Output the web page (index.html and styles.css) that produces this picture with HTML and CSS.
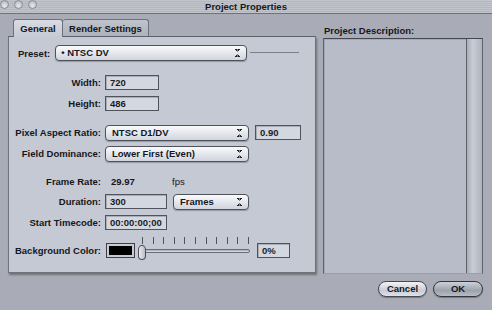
FILE: index.html
```html
<html>

<head>
	<title>Project Properties</title>
	<link rel="stylesheet" href="styles.css">
</head>

<body>
	<div class="titlebar">
		<div class="lights"><span></span><span></span><span></span></div>
		<div class="title">Project Properties</div>
	</div>

	<div class="content">
		<div class="left">
			<div class="tabs">
				<div class="tab active">General</div>
				<div class="tab">Render Settings</div>
			</div>
			<div class="panel">
				<div class="row preset-row">
					<span class="plabel">Preset:</span>
					<div class="popup preset">• NTSC DV<i class="arrows"></i></div>
					<div class="rule"></div>
				</div>

				<div class="row r-width">
					<span class="label">Width:</span>
					<div class="field w-small">720</div>
				</div>
				<div class="row r-gap6">
					<span class="label">Height:</span>
					<div class="field w-small">486</div>
				</div>

				<div class="row r-gap14">
					<span class="label">Pixel Aspect Ratio:</span>
					<div class="popup wide">NTSC D1/DV<i class="arrows"></i></div>
					<div class="field w-ratio">0.90</div>
				</div>
				<div class="row r-gap6">
					<span class="label">Field Dominance:</span>
					<div class="popup wide">Lower First (Even)<i class="arrows"></i></div>
				</div>

				<div class="row r-rate">
					<span class="label">Frame Rate:</span>
					<span class="value">29.97</span>
					<span class="unit">fps</span>
				</div>
				<div class="row r-gap5">
					<span class="label">Duration:</span>
					<div class="field w-mid">300</div>
					<div class="popup frames">Frames<i class="arrows"></i></div>
				</div>
				<div class="row r-gap6">
					<span class="label">Start Timecode:</span>
					<div class="field w-mid">00:00:00;00</div>
				</div>

				<div class="row r-bg">
					<span class="label">Background Color:</span>
					<div class="swatch"></div>
					<div class="slider">
						<div class="ticks">
							<i></i><i></i><i></i><i></i><i></i><i></i><i></i><i></i><i></i><i></i><i></i>
						</div>
						<div class="track"></div>
						<div class="thumb"></div>
					</div>
					<div class="field w-pct">0%</div>
				</div>
			</div>
		</div>

		<div class="right">
			<div class="desc-label">Project Description:</div>
			<div class="desc">
				<div class="scroll"></div>
			</div>
		</div>
	</div>

	<div class="buttons">
		<div class="btn">Cancel</div>
		<div class="btn default">OK</div>
	</div>
</body>

</html>
```

FILE: styles.css
```css
* {
	box-sizing: border-box;
}

body {
	margin: 0;
	width: 492px;
	height: 310px;
	overflow: hidden;
	background: #a9acb6;
	font-family: "Liberation Sans", Arial, sans-serif;
	font-size: 9.5px;
	font-weight: bold;
	color: #15171c;
}

/* title bar */
.titlebar {
	height: 14px;
	display: flex;
	align-items: center;
	position: relative;
	background: repeating-linear-gradient(#c2c4cb 0, #c2c4cb 1px, #b4b7bf 1px, #b4b7bf 2px);
	border-bottom: 1px solid #6e7179;
}

.lights {
	display: flex;
	gap: 5px;
	margin-top: -4px;
}

.lights span {
	width: 9px;
	height: 9px;
	border-radius: 50%;
	border: 1px solid #8a8d95;
	background: radial-gradient(circle at 50% 70%, #e8e9ee, #aeb1b9);
}

.title {
	position: absolute;
	left: 0;
	right: 0;
	top: 0;
	text-align: center;
	line-height: 13px;
}

.content {
	display: flex;
	margin-top: 5px;
}

/* left tab area */
.left {
	margin-left: 8px;
	width: 308px;
}

.tabs {
	display: flex;
	margin-left: 5px;
	height: 17px;
}

.tab {
	height: 17px;
	line-height: 17px;
	text-align: center;
	white-space: nowrap;
	border: 1px solid #6d7079;
	border-bottom: none;
	border-radius: 3px 3px 0 0;
	background: linear-gradient(#bfc3cc, #aeb2bc);
}

.tab.active {
	width: 50px;
	height: 18px;
	margin-bottom: -1px;
	position: relative;
	z-index: 1;
	background: linear-gradient(#d8dbe2, #c6cad4);
}

.tab:not(.active) {
	width: 86px;
	border-left: none;
}

.panel {
	height: 237px;
	background: #c5c9d3;
	border: 1px solid #70737c;
	border-top-color: #5d6069;
	box-shadow: 1px 2px 2px rgba(0, 0, 0, 0.35);
}

.row {
	display: flex;
	align-items: center;
	height: 15px;
}

.label {
	width: 92px;
	text-align: right;
	margin-right: 4px;
	flex-shrink: 0;
}

.preset-row {
	margin-top: 8px;
	height: 16px;
}

.plabel {
	margin-left: 9px;
	margin-right: 5px;
}

.rule {
	width: 49px;
	height: 1px;
	margin-left: 3px;
	margin-top: -2px;
	background: #7c7f88;
}

.r-width {
	margin-top: 14px;
}

.r-gap5 {
	margin-top: 5px;
}

.r-gap6 {
	margin-top: 6px;
}

.r-gap14 {
	margin-top: 14px;
}

.r-rate {
	margin-top: 13px;
}

.r-bg {
	margin-top: 13px;
}

/* controls */
.field {
	height: 15px;
	line-height: 13px;
	padding-left: 4px;
	border: 1px solid #50535b;
	background: #d3d7e0;
	box-shadow: inset 1px 1px 0 #a9adb6;
	color: #1a1c24;
}

.w-small {
	width: 54px;
}

.w-mid {
	width: 62px;
}

.w-ratio {
	width: 46px;
	margin-left: 6px;
}

.w-pct {
	width: 33px;
	margin-left: 5px;
}

.popup {
	position: relative;
	height: 16px;
	line-height: 14px;
	padding-left: 6px;
	border: 1px solid #4f525a;
	border-radius: 4px;
	background: linear-gradient(#fafbfd, #e2e5eb 55%, #d0d4dc);
	box-shadow: 0 1px 1px rgba(0, 0, 0, 0.25);
}

.preset {
	width: 192px;
	padding-left: 5px;
}

.wide {
	width: 144px;
}

.frames {
	width: 76px;
	margin-left: 6px;
}

.arrows {
	position: absolute;
	right: 6px;
	top: 3px;
	width: 5px;
	height: 8px;
	background:
		linear-gradient(to top right, transparent 50%, #222 50%) 0 0 / 2.5px 3px no-repeat,
		linear-gradient(to top left, transparent 50%, #222 50%) 2.5px 0 / 2.5px 3px no-repeat,
		linear-gradient(to bottom right, transparent 50%, #222 50%) 0 5px / 2.5px 3px no-repeat,
		linear-gradient(to bottom left, transparent 50%, #222 50%) 2.5px 5px / 2.5px 3px no-repeat;
}

.value {
	margin-left: 6px;
	width: 61px;
}

.unit {
	font-weight: normal;
}

.swatch {
	width: 29px;
	height: 15px;
	margin-left: 1px;
	padding: 2px;
	border: 1px solid #3d4047;
	box-shadow: inset 0 0 0 1px #c9ccd4;
	background: #000;
	background-clip: content-box;
}

.slider {
	position: relative;
	width: 114px;
	height: 20px;
	margin-left: 3px;
	margin-top: -8px;
}

.ticks {
	display: flex;
	justify-content: space-between;
	margin-left: 4px;
	margin-right: 3px;
	height: 7px;
}

.ticks i {
	width: 1px;
	height: 7px;
	background: #50535b;
}

.track {
	position: absolute;
	left: 3px;
	right: 2px;
	top: 12px;
	height: 4px;
	border: 1px solid #6b6e77;
	border-radius: 2px;
	background: linear-gradient(#9fa3ac, #e4e7ec);
}

.thumb {
	position: absolute;
	left: 0;
	top: 8px;
	width: 8px;
	height: 15px;
	border: 1px solid #4c4f57;
	border-radius: 4px 4px 4px 4px / 5px 5px 4px 4px;
	background: linear-gradient(to right, #e9ebf0, #b9bdc6);
}

/* right side */
.right {
	margin-left: 7px;
	width: 160px;
}

.desc-label {
	height: 19px;
	line-height: 19px;
	padding-left: 1px;
	padding-top: 2px;
}

.desc {
	display: flex;
	justify-content: flex-end;
	height: 236px;
	background: #b7bcc8;
	border: 1px solid #5f626b;
	border-top-color: #44474f;
	border-bottom-color: #9a9ea8;
	box-shadow: inset 1px 1px 0 #a3a8b4;
}

.scroll {
	width: 16px;
	height: 100%;
	border-left: 1px solid #5f626b;
	background: linear-gradient(to right, #a9aeb9, #c9cdd6 40%, #aeb3bd);
}

/* buttons */
.buttons {
	display: flex;
	justify-content: flex-end;
	gap: 6px;
	margin-top: 7px;
	margin-right: 9px;
}

.btn {
	width: 49px;
	height: 16px;
	line-height: 14px;
	text-align: center;
	border: 1px solid #464951;
	border-radius: 8px;
	background: linear-gradient(#f3f4f7, #c9ccd4 60%, #dfe2e8);
	box-shadow: 0 1px 1px rgba(0, 0, 0, 0.3);
}

.btn.default {
	width: 50px;
	background: linear-gradient(#cdd0d7, #9ea2ac 60%, #b7bbc4);
	border-color: #33363d;
}
```
